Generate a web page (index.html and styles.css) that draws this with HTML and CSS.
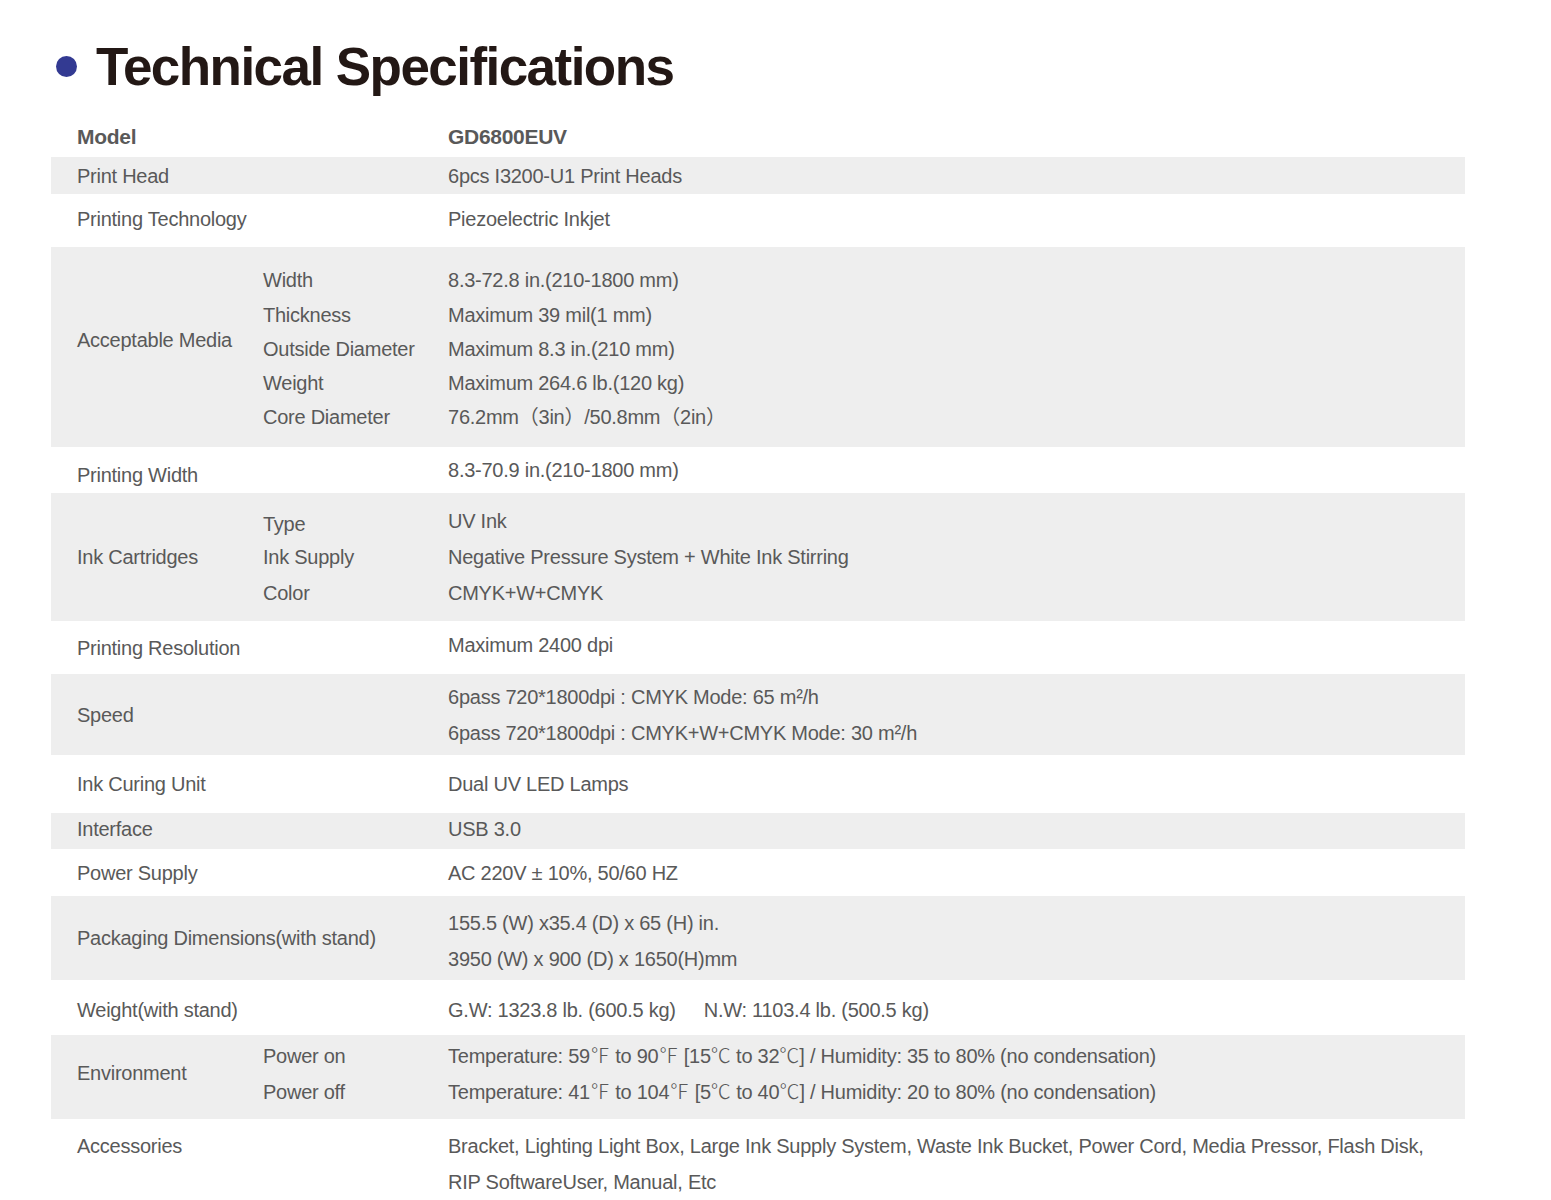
FILE: index.html
```html
<!DOCTYPE html>
<html lang="en">
<head>
<meta charset="utf-8">
<title>Technical Specifications</title>
<link rel="stylesheet" href="styles.css">
</head>
<body>
<div class="page">
  <h1 class="title"><span class="dot"></span>Technical Specifications</h1>
  <table class="spec">
    <colgroup><col class="c1"><col class="c2"><col class="c3"></colgroup>
    <tr class="row h-model">
      <td colspan="2" class="lab bold"><span class="up2">Model</span></td>
      <td class="val bold"><span class="up2">GD6800EUV</span></td>
    </tr>
    <tr class="row gray h-head">
      <td colspan="2" class="lab">Print Head</td>
      <td class="val">6pcs I3200-U1 Print Heads</td>
    </tr>
    <tr class="row h-tech">
      <td colspan="2" class="lab"><span class="up2">Printing Technology</span></td>
      <td class="val"><span class="up2">Piezoelectric Inkjet</span></td>
    </tr>
    <tr class="row gray h-media">
      <td class="lab"><span class="up7">Acceptable Media</span></td>
      <td class="sub tight">
        <div class="l1">Width</div><div>Thickness</div><div>Outside Diameter</div><div>Weight</div><div>Core Diameter</div>
      </td>
      <td class="val tight">
        <div class="l1">8.3-72.8 in.(210-1800 mm)</div>
        <div>Maximum 39 mil(1 mm)</div>
        <div>Maximum 8.3 in.(210 mm)</div>
        <div>Maximum 264.6 lb.(120 kg)</div>
        <div>76.2mm（3in）/50.8mm（2in）</div>
      </td>
    </tr>
    <tr class="row h-pw">
      <td colspan="2" class="lab"><span class="dn5">Printing Width</span></td>
      <td class="val">8.3-70.9 in.(210-1800 mm)</td>
    </tr>
    <tr class="row gray h-ink">
      <td class="lab">Ink Cartridges</td>
      <td class="sub"><div class="dn3">Type</div><div>Ink Supply</div><div>Color</div></td>
      <td class="val"><div>UV Ink</div><div>Negative Pressure System + White Ink Stirring</div><div>CMYK+W+CMYK</div></td>
    </tr>
    <tr class="row h-res">
      <td colspan="2" class="lab">Printing Resolution</td>
      <td class="val"><span class="up3">Maximum 2400 dpi</span></td>
    </tr>
    <tr class="row gray h-speed">
      <td colspan="2" class="lab">Speed</td>
      <td class="val"><div>6pass 720*1800dpi : CMYK Mode: 65 m²/h</div><div>6pass 720*1800dpi : CMYK+W+CMYK Mode: 30 m²/h</div></td>
    </tr>
    <tr class="row h-cure">
      <td colspan="2" class="lab">Ink Curing Unit</td>
      <td class="val">Dual UV LED Lamps</td>
    </tr>
    <tr class="row gray h-if">
      <td colspan="2" class="lab"><span class="up2">Interface</span></td>
      <td class="val"><span class="up2">USB 3.0</span></td>
    </tr>
    <tr class="row h-power">
      <td colspan="2" class="lab">Power Supply</td>
      <td class="val">AC 220V ± 10%, 50/60 HZ</td>
    </tr>
    <tr class="row gray h-pack">
      <td colspan="2" class="lab">Packaging Dimensions(with stand)</td>
      <td class="val"><div class="dn3">155.5 (W) x35.4 (D) x 65 (H) in.</div><div class="dn3">3950 (W) x 900 (D) x 1650(H)mm</div></td>
    </tr>
    <tr class="row h-weight">
      <td colspan="2" class="lab"><span class="dn2">Weight(with stand)</span></td>
      <td class="val"><span class="dn2">G.W: 1323.8 lb. (600.5 kg)<span class="gap"></span>N.W: 1103.4 lb. (500.5 kg)</span></td>
    </tr>
    <tr class="row gray h-env">
      <td class="lab"><span class="up4">Environment</span></td>
      <td class="sub"><div class="up3">Power on</div><div class="up3">Power off</div></td>
      <td class="val"><div class="up3">Temperature: 59<span class="cj">℉</span> to 90<span class="cj">℉</span> [15<span class="cj">℃</span> to 32<span class="cj">℃</span>] / Humidity: 35 to 80% (no condensation)</div><div class="up3">Temperature: 41<span class="cj">℉</span> to 104<span class="cj">℉</span> [5<span class="cj">℃</span> to 40<span class="cj">℃</span>] / Humidity: 20 to 80% (no condensation)</div></td>
    </tr>
    <tr class="row h-acc">
      <td colspan="2" class="lab top">Accessories</td>
      <td class="val top"><div>Bracket, Lighting Light Box, Large Ink Supply System, Waste Ink Bucket, Power Cord, Media Pressor, Flash Disk,</div><div>RIP SoftwareUser, Manual, Etc</div></td>
    </tr>
  </table>
</div>
</body>
</html>
```

FILE: styles.css
```css
html, body {
  margin: 0;
  padding: 0;
  background: #ffffff;
}

.page {
  padding: 0 0 0 51px;
  font-family: "Liberation Sans", Arial, "Noto Sans CJK SC", sans-serif;
  color: #595959;
}

.title {
  display: flex;
  align-items: flex-start;
  margin: 0;
  padding-top: 37px;
  height: 83px;
  box-sizing: border-box;
  font-size: 53px;
  line-height: 60px;
  font-weight: bold;
  letter-spacing: -1.55px;
  color: #231815;
}

.dot {
  display: inline-block;
  flex: none;
  width: 21px;
  height: 21px;
  border-radius: 50%;
  background: #333a92;
  margin: 19px 19px 0 5px;
}

.spec {
  width: 1414px;
  border-collapse: collapse;
  border-spacing: 0;
  margin-top: 37px;
  table-layout: fixed;
  font-size: 20px;
  letter-spacing: -0.25px;
}

.c1 { width: 212px; }
.c2 { width: 185px; }

.spec td {
  padding: 0;
  vertical-align: middle;
  line-height: 36px;
  white-space: nowrap;
}

.gray td { background: #eeeeee; }

.lab { padding-left: 26px !important; }
.bold { font-weight: bold; font-size: 21px; letter-spacing: -0.3px; }

.tight { line-height: 34px !important; padding-top: 3px !important; }
.tight .l1 { margin-top: -1px; margin-bottom: 1px; }

.up7 { position: relative; top: -7px; }
.up4 { position: relative; top: -4px; }
.up3 { position: relative; top: -3px; }
.up2 { position: relative; top: -2px; }
.dn5 { position: relative; top: 5px; }
.dn3 { position: relative; top: 3px; }
.dn2 { position: relative; top: 2px; }

.top { vertical-align: top !important; padding-top: 9px !important; }

.gap { display: inline-block; width: 28px; }

.cj {
  font-family: "Noto Sans CJK SC", sans-serif;
  font-weight: 300;
  letter-spacing: 0;
  line-height: 1;
}

.h-model { height: 37px; }
.h-head { height: 37px; }
.h-tech { height: 53px; }
.h-media { height: 200px; }
.h-pw { height: 46px; }
.h-ink { height: 128px; }
.h-res { height: 53px; }
.h-speed { height: 81px; }
.h-cure { height: 58px; }
.h-if { height: 36px; }
.h-power { height: 47px; }
.h-pack { height: 84px; }
.h-weight { height: 55px; }
.h-env { height: 84px; }
.h-acc { height: 90px; }
```
